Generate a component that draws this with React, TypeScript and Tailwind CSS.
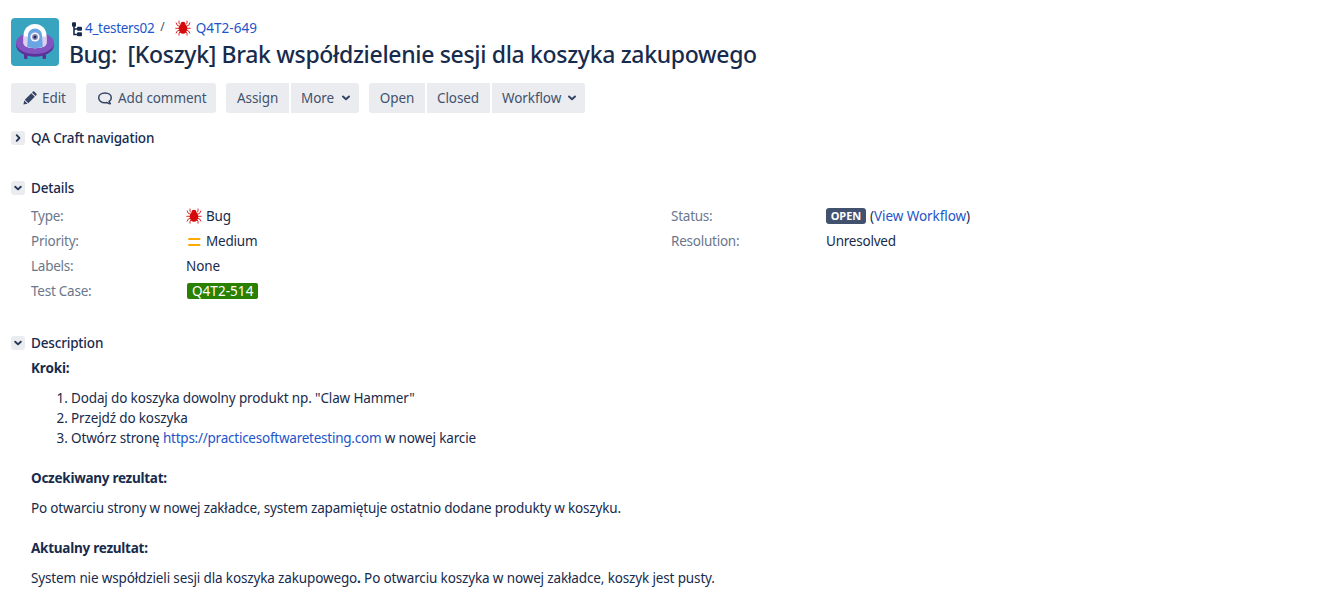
import type { ReactNode } from 'react';

function Avatar() {
  return (
    <svg className="size-12 shrink-0" viewBox="0 0 48 48">
      <rect width="48" height="48" rx="4" fill="#39a4c0" />
      <path d="M13 34h3.500v6a1 1 0 0 1-1 1H14a1 1 0 0 1-1-1zM31.500 34H35v6a1 1 0 0 1-1 1h-1.500a1 1 0 0 1-1-1z" fill="#5b3298" />
      <ellipse cx="24" cy="27" rx="19" ry="11.800" fill="#5b3298" />
      <ellipse cx="24" cy="25" rx="19" ry="11" fill="#8154c1" />
      <path d="M12.500 17.500a11.500 11.500 0 0 1 23 0v7.500c0 3-4 5.200-11.500 5.200s-11.500-2.200-11.500-5.200z" fill="#ffffff" />
      <path d="M12.500 18.500v6.500c0 3 4 5.200 11.500 5.200s11.500-2.200 11.500-5.200v-6.500z" fill="#dccff0" />
      <path d="M17 17.500c0-4 3-7 7-7s7 3 7 7l.8 11c-2 1.200-5 1.700-7.800 1.700s-5.800-.5-7.800-1.700z" fill="#6aa5e3" />
      <circle cx="24" cy="19" r="4.600" fill="#f4f4fb" />
      <circle cx="24" cy="19" r="2.900" fill="#8d86b8" />
      <circle cx="24" cy="19" r="1.500" fill="#1d2a5c" />
    </svg>
  );
}

function TreeIcon() {
  return (
    <svg className="mt-[4px] h-[15px] w-[13px] shrink-0" viewBox="0 0 13 15">
      <path d="M3 3v9.500h4M3 7h4" fill="none" stroke="#172b4d" strokeWidth="1.600" />
      <rect x="1" y="0.300" width="4" height="4.400" rx="1" fill="#172b4d" />
      <rect x="6" y="4.700" width="5" height="4" rx="1" fill="#172b4d" />
      <rect x="6" y="10.300" width="5" height="4" rx="1" fill="#172b4d" />
    </svg>
  );
}

function BugIcon() {
  return (
    <svg className="size-4 shrink-0" viewBox="0 0 16 16">
      <path
        d="M5 6.500 2.200 5.200 1 2.500M4.500 8.300H.3M5 10l-2.700 1L1 13.500M5.500 4.800 4 3.200V.6M11 6.500l2.800-1.300L15 2.500M11.500 8.300h4.200M11 10l2.700 1L15 13.500M10.500 4.800 12 3.200V.6M5.500 11.500 4 13v2.600M10.500 11.500 12 13v2.600"
        fill="none" stroke="#de2a2a" strokeWidth="1" strokeLinejoin="round"
      />
      <ellipse cx="8" cy="8.600" rx="4.300" ry="5.200" fill="#d40b0b" />
      <ellipse cx="8" cy="3.400" rx="2.300" ry="1.700" fill="#d40b0b" />
    </svg>
  );
}

function PencilIcon() {
  return (
    <svg className="mr-[5px] size-[14px] shrink-0" viewBox="0 0 14 14">
      <path d="M.4 13.600 1.300 9.500l3.200 3.200zM1.800 8.700 8.300 2.200l3.500 3.500-6.500 6.500zM9 1.500l.8-.8c.5-.5 1.100-.5 1.600 0l1.900 1.900c.5.500.5 1.100 0 1.600l-.8.800z" fill="#344563" />
    </svg>
  );
}

function CommentIcon() {
  return (
    <svg className="mr-[5px] h-[14px] w-[16px] shrink-0" viewBox="0 0 16 14">
      <path d="M8 2c3.700 0 6.300 2.100 6.300 4.800 0 1.600-.8 2.900-2.200 3.700.1 1.100.7 1.700 1.700 2.100-1.600.2-2.900-.1-3.900-1.100-.6.100-1.200.2-1.900.2-3.700 0-6.300-2.100-6.300-4.900S4.300 2 8 2z" fill="none" stroke="#344563" strokeWidth="1.500" />
    </svg>
  );
}

function ChevronDown() {
  return (
    <svg className="h-[6px] w-[10px] shrink-0" viewBox="0 0 10 6">
      <path d="M2 1.500 5 4.300l3-2.800" fill="none" stroke="#344563" strokeWidth="2" strokeLinecap="round" strokeLinejoin="round" />
    </svg>
  );
}

function Button({ className, children }: { className: string; children: ReactNode }) {
  return (
    <button className={`flex h-[30px] items-center bg-[#ebecf0] tracking-[-0.09px] whitespace-nowrap text-[#42526e] ${className}`}>
      {children}
    </button>
  );
}

function SectionHead({ title, open = true }: { title: string; open?: boolean }) {
  return (
    <div className="flex h-5 items-center">
      <span className="mr-[6px] flex size-[14px] items-center justify-center rounded-[3px] bg-[#ebecf0]">
        <svg className={open ? 'size-[10px]' : 'size-[10px] -rotate-90'} viewBox="0 0 10 10">
          <path d="M2.200 3.700 5 6.400l2.800-2.700" fill="none" stroke="#253858" strokeWidth="1.900" strokeLinecap="round" strokeLinejoin="round" />
        </svg>
      </span>
      <h2 className="font-[550] tracking-[-0.17px]">{title}</h2>
    </div>
  );
}

function Field({ label, children }: { label: string; children: ReactNode }) {
  return (
    <div className="flex h-[25px] items-center">
      <dt className="w-[155px] tracking-[-0.24px] text-[#6b778c]">{label}</dt>
      <dd className="flex items-center tracking-[-0.22px]">{children}</dd>
    </div>
  );
}

export default function App() {
  return (
    <main className="h-[612px] overflow-hidden bg-white pt-[18px] pl-[11px] font-['Noto_Sans',sans-serif] text-[13.5px] leading-5 tracking-[-0.14px] text-[#172b4d]">
      <header className="flex h-12">
        <Avatar />
        <div className="ml-[10px]">
          <div className="flex h-5 items-center">
            <span className="ml-[2px] flex items-center self-start"><TreeIcon /></span>
            <a className="ml-px tracking-[-0.3px] text-[#1e55c9]">4_testers02</a>
            <span className="mr-[10px] ml-[6px] -translate-y-px text-[12px] text-[#42526e]">/</span>
            <BugIcon />
            <a className="ml-[5px] tracking-[0.05px] text-[#1e55c9]">Q4T2-649</a>
          </div>
          <h1 className="flex h-8 items-center text-[23px] font-medium tracking-[-0.32px] whitespace-nowrap">
            <span className="mr-[11px] tracking-[-0.6px]">Bug:</span>
            <span>[Koszyk] Brak współdzielenie sesji dla koszyka zakupowego</span>
          </h1>
        </div>
      </header>

      <div className="mt-[17px] flex gap-[10px]">
        <Button className="w-[65px] rounded-[3px] pl-3"><PencilIcon />Edit</Button>
        <Button className="w-[130px] rounded-[3px] pl-[11px]"><CommentIcon />Add comment</Button>
        <div className="flex gap-[2px]">
          <Button className="w-[63px] rounded-l-[3px] pl-[11px]">Assign</Button>
          <Button className="w-[68px] justify-between rounded-r-[3px] pr-2 pl-[10px]">More<ChevronDown /></Button>
        </div>
        <div className="flex gap-[2px]">
          <Button className="w-[56px] justify-center rounded-l-[3px]">Open</Button>
          <Button className="w-[63px] justify-center pr-px">Closed</Button>
          <Button className="w-[93px] justify-between rounded-r-[3px] pr-2 pl-[10px]">Workflow<ChevronDown /></Button>
        </div>
      </div>

      <section className="mt-[15px]">
        <SectionHead title="QA Craft navigation" open={false} />
      </section>

      <section className="mt-[30px]">
        <SectionHead title="Details" />
        <div className="mt-[5px] ml-5 grid grid-cols-[640px_1fr]">
          <dl>
            <Field label="Type:"><BugIcon /><span className="ml-1">Bug</span></Field>
            <Field label="Priority:">
              <svg className="size-4" viewBox="0 0 16 16">
                <path d="M3 6h10.500M3 12h10.500" stroke="#ffab00" strokeWidth="2" strokeLinecap="round" />
              </svg>
              <span className="ml-1">Medium</span>
            </Field>
            <Field label="Labels:"><span className="tracking-[-0.05px]">None</span></Field>
            <Field label="Test Case:">
              <span className="ml-[1px] flex h-4 items-center rounded-[2px] bg-[#2a8000] px-[5px] tracking-[0.05px] text-white">Q4T2-514</span>
            </Field>
          </dl>
          <dl>
            <Field label="Status:">
              <span className="mt-px mr-1 flex h-4 w-10 items-center justify-center rounded-[3px] bg-[#42526e] text-[11px] font-bold tracking-normal text-white">OPEN</span>
              <span className="tracking-[-0.07px]">(<a className="text-[#1e55c9]">View Workflow</a>)</span>
            </Field>
            <Field label="Resolution:">Unresolved</Field>
          </dl>
        </div>
      </section>

      <section className="mt-[30px]">
        <SectionHead title="Description" />
        <div className="mt-[5px] ml-5">
          <p className="font-bold">Kroki:</p>
          <ol className="mt-[10px] list-decimal pl-10">
            <li>Dodaj do koszyka dowolny produkt np. "Claw Hammer"</li>
            <li>Przejdź do koszyka</li>
            <li>Otwórz stronę <a className="tracking-[-0.24px] text-[#1e55c9]">https://practicesoftwaretesting.com</a> w nowej karcie</li>
          </ol>
          <p className="mt-5 font-bold tracking-[-0.27px]">Oczekiwany rezultat:</p>
          <p className="mt-[10px] tracking-[-0.17px]">Po otwarciu strony w nowej zakładce, system zapamiętuje ostatnio dodane produkty w koszyku.</p>
          <p className="mt-5 font-bold tracking-[-0.25px]">Aktualny rezultat:</p>
          <p className="mt-[10px]">System nie współdzieli sesji dla koszyka zakupowego<b>.</b> Po otwarciu koszyka w nowej zakładce, koszyk jest pusty.</p>
        </div>
      </section>
    </main>
  );
}
